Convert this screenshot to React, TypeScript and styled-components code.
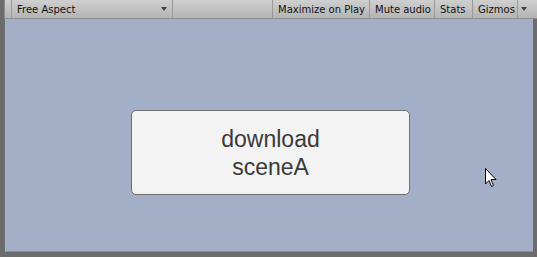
import React from "react";
import styled, { createGlobalStyle } from "styled-components";

const Global = createGlobalStyle`
  html, body {
    margin: 0;
    padding: 0;
    background: #6c6c6c;
    overflow: hidden;
  }
`;

const Window = styled.div`
  width: 537px;
  height: 257px;
  display: flex;
  flex-direction: column;
  background: #6c6c6c;
  padding-left: 4px;
  box-sizing: border-box;
  position: relative;
  font-family: "DejaVu Sans", "Liberation Sans", sans-serif;
`;

const Toolbar = styled.div`
  height: 18px;
  display: flex;
  align-items: stretch;
  border-left: 1px solid #8a8a8a;
  border-bottom: 1px solid #8e8e8e;
  background: linear-gradient(#cfcfcf, #b4b4b4);
`;

const Spacer = styled.div`
  width: 6px;
`;

const Tool = styled.div<{ $w: number; $pad?: number }>`
  width: ${(p) => p.$w}px;
  box-sizing: border-box;
  display: flex;
  align-items: center;
  justify-content: space-between;
  padding: 0 ${(p) => p.$pad ?? 5}px;
  border-left: 1px solid #9a9a9a;
  font-size: 10px;
  color: #111;
  white-space: nowrap;
`;

const Fill = styled.div`
  flex: 1;
  border-left: 1px solid #9a9a9a;
`;

const Caret = styled.span`
  width: 0;
  height: 0;
  border-left: 3px solid transparent;
  border-right: 3px solid transparent;
  border-top: 4px solid #444;
`;

const View = styled.div`
  flex: 1;
  margin: 0 4px 5px 1px;
  padding: 91px 0 0 125px;
  background: #a3aec7;
  border-left: 1px solid #b4b4b4;
  border-bottom: 1px solid #8d8d8d;
  display: flex;
  align-items: flex-start;
`;

const BigButton = styled.button`
  width: 279px;
  height: 85px;
  background: #f3f3f3;
  border: 1px solid #6f6f6f;
  border-radius: 5px;
  font-family: "Liberation Sans", Arial, sans-serif;
  font-size: 23px;
  line-height: 28px;
  color: #3a3a3a;
  padding: 0;
`;

const Cursor = styled.svg`
  position: absolute;
  left: 485px;
  top: 168px;
`;

export default function App() {
  return (
    <>
      <Global />
      <Window>
        <Toolbar>
          <Spacer />
          <Tool $w={161}>
            Free Aspect
            <Caret />
          </Tool>
          <Fill />
          <Tool $w={97}>Maximize on Play</Tool>
          <Tool $w={65}>Mute audio</Tool>
          <Tool $w={38}>Stats</Tool>
          <Tool $w={45}>Gizmos</Tool>
          <Tool $w={14} $pad={3}>
            <Caret />
          </Tool>
          <Spacer />
        </Toolbar>
        <View>
          <BigButton>
            download
            <br />
            sceneA
          </BigButton>
        </View>
        <Cursor width="12" height="20" viewBox="0 0 12 20">
          <path
            d="M0.5 0.5 L0.5 16 L4 12.5 L6.5 18.5 L8.5 17.5 L6 11.5 L11 11.5 Z"
            fill="#fff"
            stroke="#000"
            strokeWidth="1"
          />
        </Cursor>
      </Window>
    </>
  );
}
